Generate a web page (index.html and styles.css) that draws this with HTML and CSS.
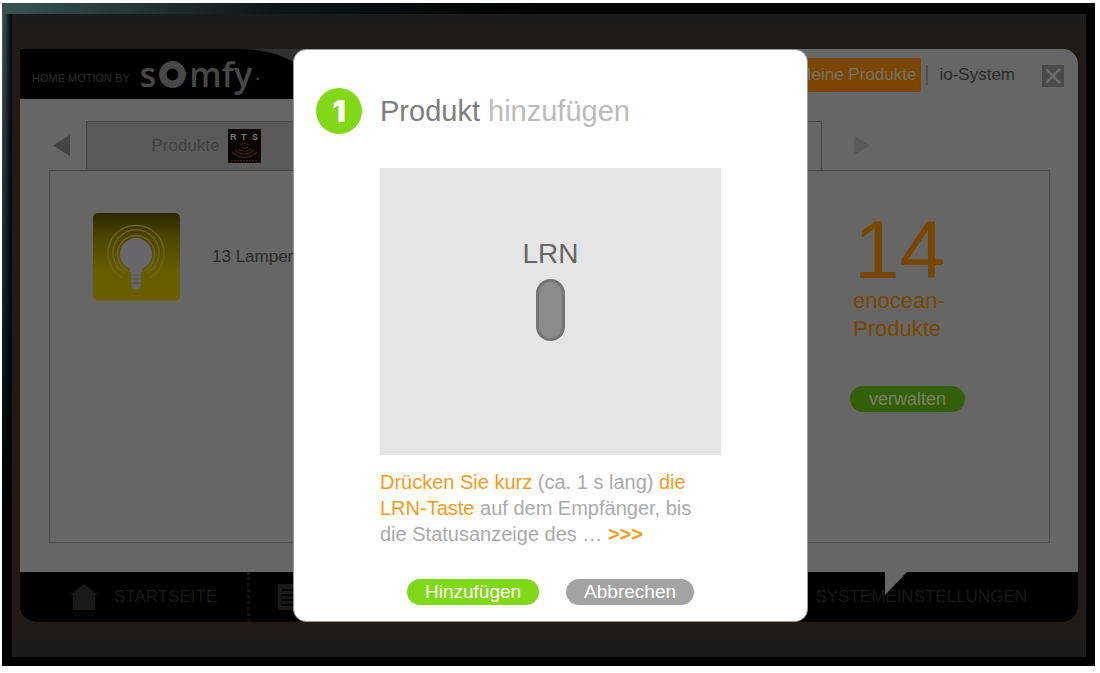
FILE: index.html
```
<!DOCTYPE html>
<html lang="de">
<head>
<meta charset="utf-8">
<title>Produkt hinzufügen</title>
<link rel="stylesheet" href="styles.css">
</head>
<body>
<div class="device">
  <div class="bezel">
    <div class="screen">
      <div class="app">
        <header class="header">
          <div class="brand-wrap">
            <div class="brand">
              <span class="tagline">HOME MOTION BY</span>
              <span class="logo">
                <span>s</span>
                <svg class="ring" viewBox="0 0 27 27" role="img" aria-label="o"><circle cx="13.500" cy="13.500" r="9.700" fill="none" stroke="#484848" stroke-width="7.400"/></svg>
                <span>mfy</span><span class="dot">.</span>
              </span>
            </div>
          </div>
          <nav class="top-nav">
            <a class="top-link current" href="#">Meine Produkte</a>
            <a class="top-link divided" href="#">io-System</a>
            <button class="close" type="button" aria-label="Schließen">
              <svg viewBox="0 0 22 22"><rect width="22" height="22" fill="#494949"/><path d="M4 4L18 18M18 4L4 18" stroke="#6c6c6c" stroke-width="2.500"/></svg>
            </button>
          </nav>
        </header>
        <main class="main">
          <div class="tabs">
            <button class="arrow" type="button" aria-label="Zurück"><svg viewBox="0 0 18 21"><path d="M0 10.500L17 0V21Z" fill="#434343"/></svg></button>
            <button class="tab" type="button">
              <span>Produkte</span>
              <svg class="rts" viewBox="0 0 33 34" role="img" aria-label="RTS">
                <rect width="33" height="34" fill="#0b0505"/>
                <text x="2" y="11" class="rts-text">R</text><text x="13" y="11" class="rts-text">T</text><text x="24" y="11" class="rts-text">S</text>
                <g fill="none" stroke="#3d2220" stroke-width="1.200">
                  <path d="M12 16Q16.500 13 21 16"/><path d="M13 18Q16.500 20 20 18"/><path d="M10 20Q16.500 24 23 20"/><path d="M7 21Q16.500 29 26 21"/><path d="M4 23Q16.500 34 29 23"/>
                  <path d="M3 31.500H30" stroke-dasharray="2 1"/>
                </g>
              </svg>
            </button>
            <div class="tab-active"></div>
            <button class="arrow next" type="button" aria-label="Weiter"><svg viewBox="0 0 18 21"><path d="M1 1L17 10.500L1 20Z" fill="#5a5a5a"/></svg></button>
          </div>
          <section class="panel">
            <div class="lamps">
              <svg class="lamp" viewBox="0 0 87 88" aria-hidden="true">
                <defs><linearGradient id="lampfill" x1="0" y1="0" x2="0" y2="1"><stop offset="0" stop-color="#2b2800"/><stop offset="0.300" stop-color="#4d4700"/><stop offset="0.650" stop-color="#665d00"/><stop offset="1" stop-color="#6a6000"/></linearGradient></defs>
                <rect width="87" height="88" rx="5" fill="url(#lampfill)"/>
                <g fill="none" stroke="#6b6420">
                  <path d="M30 65A28 28 0 1 1 56 65" stroke-width="1.500"/>
                  <path d="M32 60A23 23 0 1 1 54 60" stroke-width="1.500"/>
                  <circle cx="43" cy="41" r="18.500" stroke-width="1.500"/>
                </g>
                <circle cx="43" cy="41" r="16" fill="#68666a"/>
                <path d="M37 54H49V59H48V72L46 76H40L38 72V59H37Z" fill="#68666a"/>
                <path d="M38 62H48M38 66H48M38 70H48" stroke="#5e5a40"/>
              </svg>
              <span>13 Lampen</span>
            </div>
            <div class="summary">
              <strong class="count">14</strong>
              <span class="kind">enocean-<br>Produkte</span>
              <button class="pill manage" type="button">verwalten</button>
            </div>
          </section>
        </main>
        <footer class="footer">
          <a class="foot-link home" href="#">
            <svg viewBox="0 0 28 26" aria-hidden="true"><path d="M14 0L28 11H25V26H3V11H0Z" fill="#191919"/></svg>
            <span>STARTSEITE</span>
          </a>
          <svg class="list" viewBox="0 0 24 26" aria-hidden="true"><path d="M0 0H24V26H0Z" fill="#191919"/><path d="M3 6H24M3 11H24M3 16H24M3 21H24" stroke="#060606" stroke-width="2"/></svg>
          <a class="foot-link settings" href="#"><svg class="notch" viewBox="0 0 22 23" aria-hidden="true"><path d="M0 0H22L0 23Z" fill="#666"/></svg><span>SYSTEMEINSTELLUNGEN</span></a>
        </footer>
      </div>
      <div class="dialog" role="dialog" aria-labelledby="dialog-title">
        <div class="dialog-head">
          <span class="step">1</span>
          <h1 class="title" id="dialog-title">Produkt <span>hinzufügen</span></h1>
        </div>
        <div class="dialog-body">
          <div class="figure">
            <span>LRN</span>
            <div class="key"></div>
          </div>
          <p class="hint"><em>Drücken Sie kurz</em> (ca. 1 s lang) <em>die LRN-Taste</em> auf dem Empfänger, bis die Statusanzeige des … <a class="more" href="#">&gt;&gt;&gt;</a></p>
          <div class="actions">
            <button class="pill add" type="button">Hinzufügen</button>
            <button class="pill cancel" type="button">Abbrechen</button>
          </div>
        </div>
      </div>
    </div>
  </div>
</div>
</body>
</html>
```
FILE: styles.css
```
* { box-sizing: border-box; }
body {
  margin: 0;
  padding: 3px 5px 7px 2px;
  background: #fff;
  font-family: "Liberation Sans", Arial, sans-serif;
  font-size: 17px;
}
button { border: 0; padding: 0; background: none; font: inherit; color: inherit; }
a { color: inherit; text-decoration: none; }
svg { display: block; }

.device {
  padding: 11px 9px 9px 10px;
  background:
    linear-gradient(90deg, #3a5352, #0c1618 25%, #000 50%) top / 100% 11px no-repeat,
    linear-gradient(90deg, transparent, #000 10px),
    linear-gradient(180deg, #45605f 0, #2b4243 25%, #132124 50%, #000 75%);
}
.bezel {
  padding: 35px 8px;
  background: linear-gradient(180deg, #1c1c1c, #1f1b18 15px, #1f1b18 620px, #1c1c1c);
}
.screen { display: grid; }
.app {
  grid-area: 1 / 1;
  display: flex;
  flex-direction: column;
  overflow: hidden;
  border-radius: 0 15px 15px 15px;
  background: #666;
  color: #333;
}

.header { display: flex; justify-content: space-between; height: 50px; }
.brand-wrap { width: 300px; background: #303030; }
.brand {
  display: flex;
  align-items: center;
  gap: 10px;
  height: 100%;
  padding-left: 12px;
  border-top-right-radius: 80px 50px;
  background: #000;
}
.tagline { padding-top: 8px; font-size: 11px; color: #2e2e2e; }
.logo {
  display: flex;
  align-items: center;
  gap: 3px;
  font: 600 34px/50px "Open Sans", sans-serif;
  color: #484848;
}
.ring { width: 27px; height: 27px; }
.dot { font-size: 17px; }
.top-nav { display: flex; align-items: flex-start; padding: 9px 14px 0 0; }
.top-link { height: 34px; line-height: 34px; }
.current { padding: 0 5px; border-radius: 2px; background: #7a4600; color: #77706a; }
.divided { display: flex; align-items: center; padding-left: 5px; color: #2a2a2a; }
.divided::before { content: ""; width: 2px; height: 20px; margin-right: 11px; background: #505050; }
.close { width: 22px; height: 22px; margin: 7px 0 0 27px; }

.main { flex: 1; display: flex; flex-direction: column; padding: 22px 28px 29px 29px; }
.tabs { display: flex; align-items: center; height: 49px; padding-left: 4px; }
.arrow { width: 18px; }
.arrow.next { margin: 0 179px 0 31px; }
.tab {
  display: flex;
  align-items: center;
  justify-content: center;
  gap: 8px;
  width: 240px;
  height: 49px;
  margin-left: 15px;
  border: 1px solid #464646;
  border-bottom: 0;
  background: #5a5a5a;
  color: #424242;
}
.rts { width: 33px; height: 34px; }
.rts-text { font: bold 9px "Liberation Sans", sans-serif; fill: #777; }
.tab-active { flex: 1; align-self: stretch; border: 1px solid #464646; border-width: 1px 1px 0 0; }
.panel {
  flex: 1;
  display: flex;
  justify-content: space-between;
  padding: 42px 81px 42px 43px;
  border: 1px solid #505050;
  border-top-color: #464646;
}
.lamps { display: flex; align-items: center; gap: 32px; align-self: flex-start; color: #2a2a2a; }
.lamp { width: 87px; height: 88px; }
.summary { display: flex; flex-direction: column; align-items: flex-start; width: 118px; color: #794600; }
.count { padding-left: 4px; font-size: 82px; font-weight: 400; line-height: 74px; }
.kind { padding-left: 3px; font-size: 22px; line-height: 28px; }
.pill { height: 26px; padding: 0 19px; border-radius: 13px; font-size: 19px; line-height: 26px; color: #fff; }
.manage { margin-top: 43px; background: #355f05; font-size: 18px; color: #75836a; }

.footer {
  display: flex;
  align-items: stretch;
  height: 50px;
  background: #000;
  color: #191919;
}
.foot-link { display: flex; align-items: center; gap: 16px; }
.home { width: 230px; padding-left: 50px; border-right: 3px dotted #141414; }
.home svg { width: 28px; height: 26px; }
.list { width: 24px; height: 26px; margin: 12px 0 0 28px; }
.settings { position: relative; margin-left: auto; padding-right: 51px; }
.notch { position: absolute; top: 0; left: 70px; width: 22px; height: 23px; }

.dialog {
  grid-area: 1 / 1;
  justify-self: center;
  z-index: 1;
  width: 515px;
  margin-left: 3px;
  padding: 38px 22px 16px;
  border: 1px solid #999;
  border-radius: 13px;
  background: #fff;
}
.dialog-head { display: flex; align-items: center; gap: 18px; }
.step {
  width: 46px;
  height: 46px;
  border-radius: 50%;
  background: #80d817;
  color: #fff;
  font: 900 30px/46px Inter, sans-serif;
  text-align: center;
}
.title { margin: 0; font-size: 29px; font-weight: 400; line-height: 46px; color: #7d7d7d; }
.title span { color: #bbb; }
.dialog-body { padding: 34px 64px 0; }
.figure {
  display: flex;
  flex-direction: column;
  align-items: center;
  gap: 9px;
  height: 287px;
  padding-top: 70px;
  background: #e5e5e5;
  color: #666;
  font-size: 28px;
  line-height: 32px;
}
.key { width: 29px; height: 62px; border: 3px solid #757575; border-radius: 15px; background: #8b8b8b; }
.hint { margin: 14px 0 32px; font-size: 20px; line-height: 26px; color: #aaa; }
.hint em { font-style: normal; color: #f79a1b; }
.more { font-weight: 700; color: #f79a1b; }
.actions { display: flex; justify-content: center; gap: 27px; }
.add { background: #80d817; }
.cancel { background: #a3a3a3; }
.add, .cancel { padding: 0 18px; }
```
